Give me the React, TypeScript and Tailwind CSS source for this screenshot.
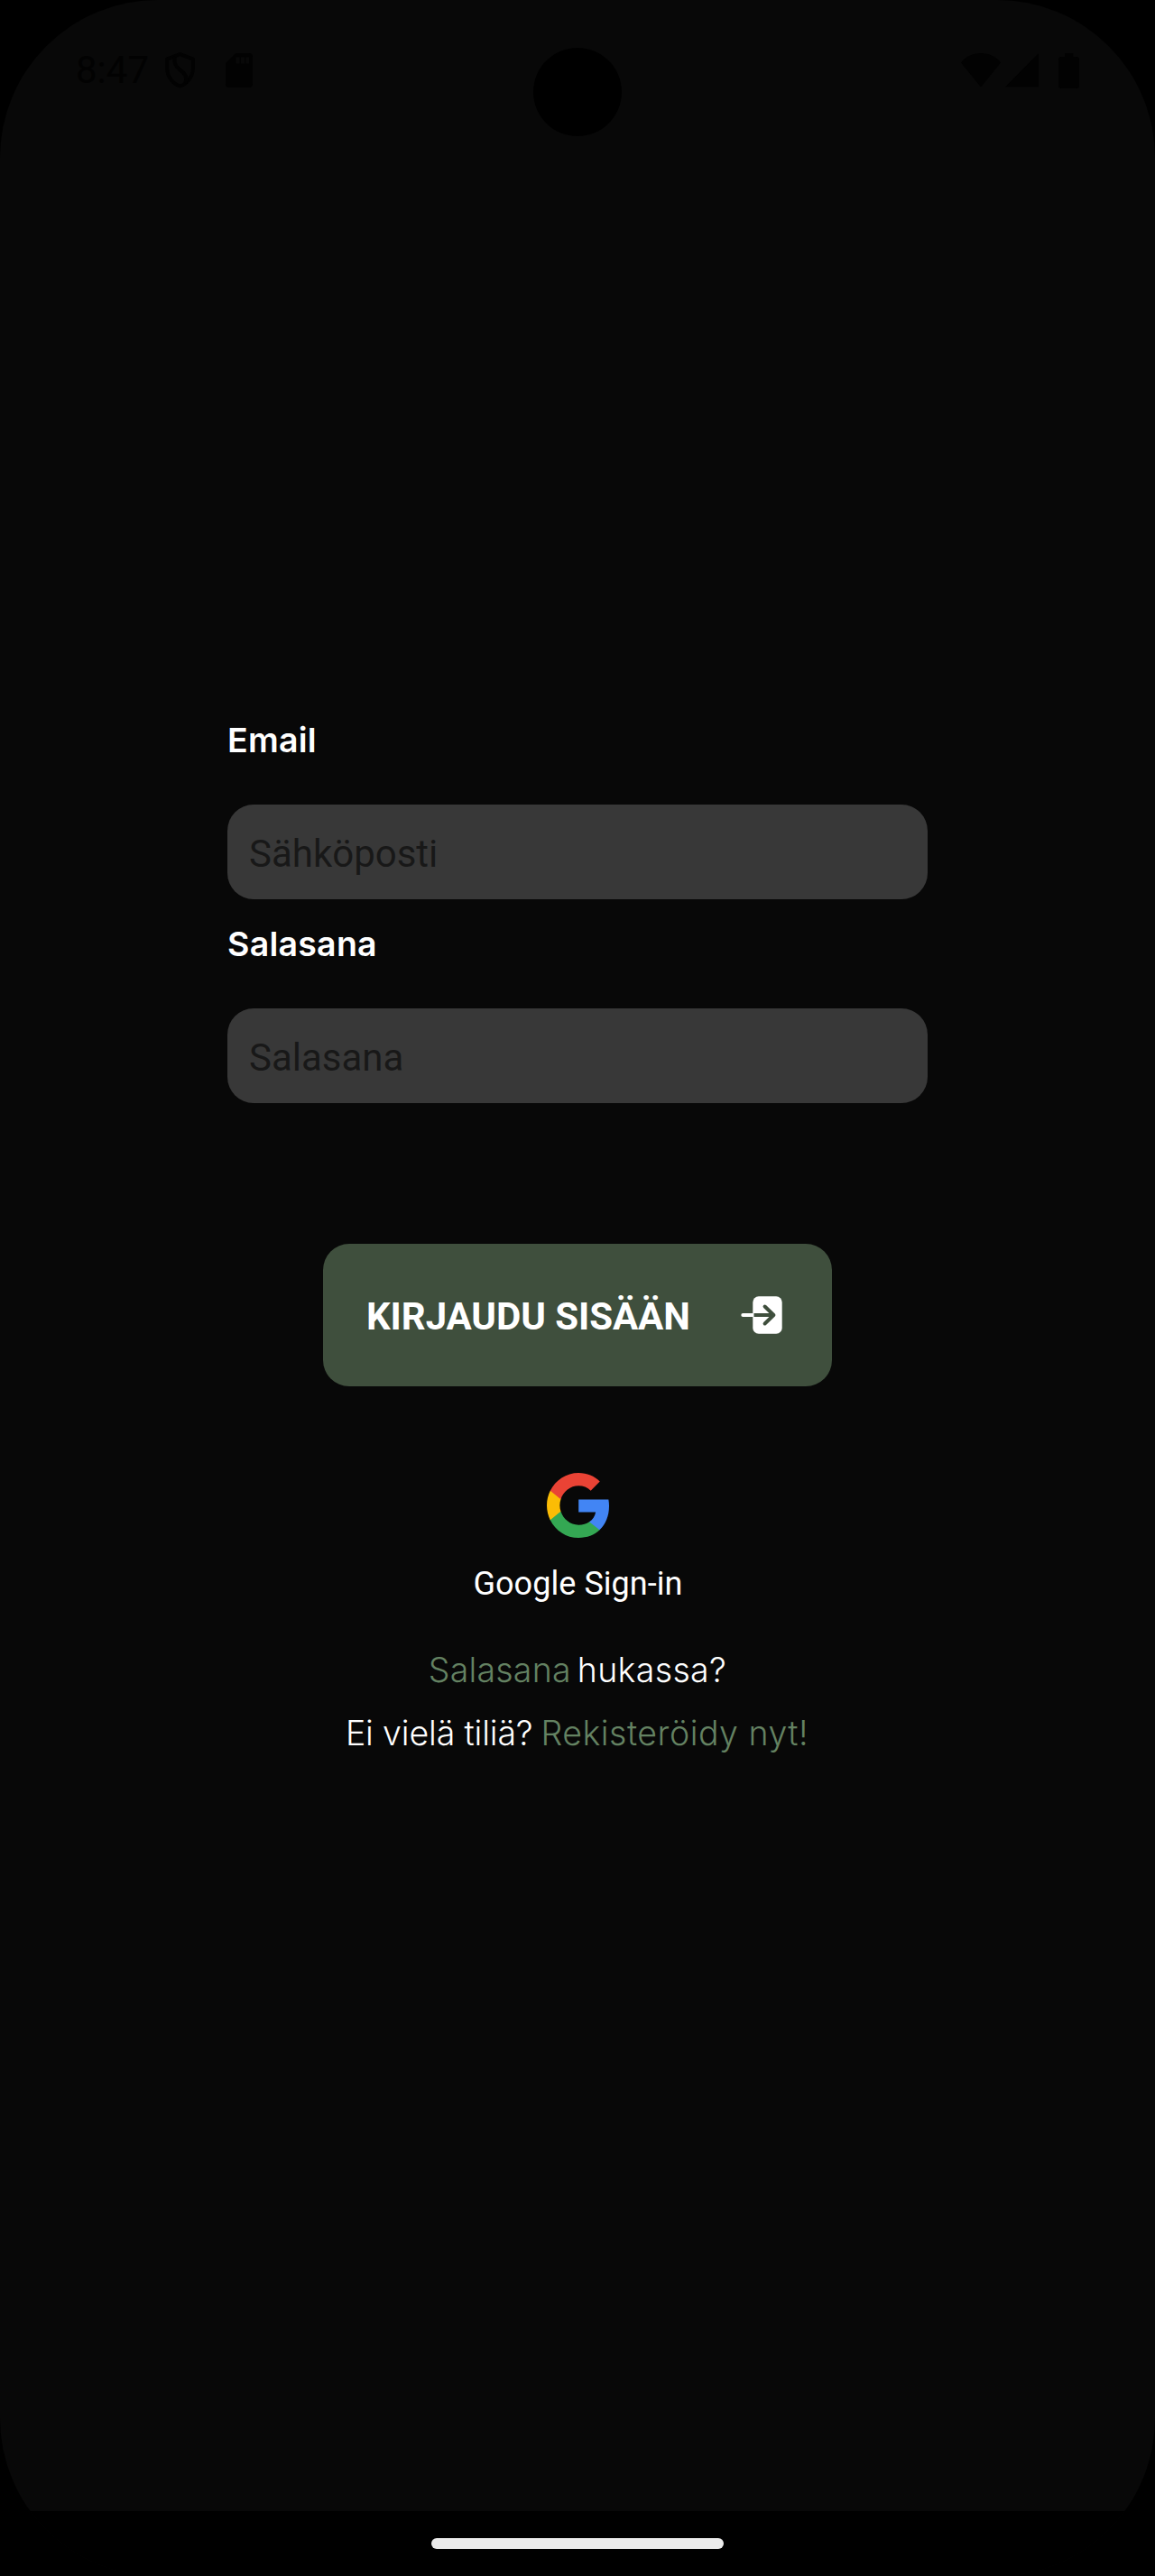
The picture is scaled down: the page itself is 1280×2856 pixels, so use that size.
function StatusBar() {
  return (
    <header className="relative flex h-[156px] shrink-0 items-center justify-between px-[84px] text-[#020202]">
      <div className="flex items-center">
        <span className="w-[81px] text-[42px] leading-[50px]">8:47</span>
        <svg className="ml-[18px] h-10 w-[33px]" viewBox="0 0 33 40" fill="none" stroke="currentColor" strokeWidth="4">
          <path d="M16.5 2.200 30.800 7.400V18c0 8.600-6 16.600-14.300 19.600C8.200 34.600 2.200 26.600 2.200 18V7.400Z" strokeLinejoin="round" />
          <path d="M11 5c-2 6 0 10 5 14 7 5 9 10 6 15" />
        </svg>
        <svg className="ml-[34px] h-[38px] w-[30px]" viewBox="0 0 30 38">
          <path d="M11 0h15a4 4 0 0 1 4 4v30a4 4 0 0 1-4 4H4a4 4 0 0 1-4-4V11Z" fill="currentColor" />
          <path d="M11.500 4.500h4v7h-4zM17 4.500h4v7h-4zM22.500 4.500h3.500v7h-3.500z" fill="#080808" />
        </svg>
      </div>
      <div className="absolute top-[53px] left-[591px] size-[98px] rounded-full bg-black" />
      <div className="flex items-center">
        <svg className="h-[38px] w-11" viewBox="0 0 44 38" fill="currentColor">
          <path d="M22 37.500 0 10.500C5 3.500 13 0 22 0s17 3.500 22 10.500Z" />
        </svg>
        <svg className="ml-[5px] h-[38px] w-[37px]" viewBox="0 0 37 38" fill="currentColor">
          <path d="M37 0v37.500H0Z" />
        </svg>
        <svg className="ml-[22px] h-[39px] w-[23px]" viewBox="0 0 23 39" fill="currentColor">
          <path d="M7 0h9.500v4H20a3 3 0 0 1 3 3v29a3 3 0 0 1-3 3H3a3 3 0 0 1-3-3V7a3 3 0 0 1 3-3h4Z" />
        </svg>
      </div>
    </header>
  );
}

type FieldProps = { id: string; label: string; placeholder: string; type: string };

function Field({ id, label, placeholder, type }: FieldProps) {
  return (
    <div className="flex flex-col gap-11">
      <label
        htmlFor={id}
        className="pt-px font-[Inter,sans-serif] text-[37.5px] leading-[54px] font-semibold tracking-[0.25px] text-white"
      >
        {label}
      </label>
      <input
        id={id}
        type={type}
        placeholder={placeholder}
        className="h-[105px] w-full rounded-[29px] bg-[#383838] px-6 pt-1 text-[42px] text-white outline-none placeholder:text-[#181818]"
      />
    </div>
  );
}

function LoginIcon() {
  return (
    <svg className="h-[42px] w-[46px]" viewBox="0 0 46 42" fill="none" strokeWidth="4" strokeLinecap="round" strokeLinejoin="round">
      <rect x="13.300" y="0.300" width="32.400" height="41.400" rx="6.500" fill="#fff" />
      <path d="M2.300 21H13.300" stroke="#fff" />
      <path d="M14.500 21H36" stroke="#3f4f3d" strokeLinecap="butt" />
      <path d="m26.600 11.500 9.800 9.500-9.800 9.500" stroke="#3f4f3d" />
    </svg>
  );
}

function GoogleLogo() {
  return (
    <svg className="h-[72px] w-[69px]" viewBox="1 1 21.560 22" preserveAspectRatio="none">
      <path fill="#4285F4" d="M22.560 12.250c0-.780-.070-1.530-.200-2.250H12v4.260h5.920c-.260 1.370-1.040 2.530-2.210 3.310v2.770h3.570c2.080-1.920 3.280-4.740 3.280-8.090z" />
      <path fill="#34A853" d="M12 23c2.970 0 5.460-.980 7.280-2.660l-3.570-2.770c-.980.660-2.230 1.060-3.710 1.060-2.860 0-5.290-1.930-6.160-4.530H2.180v2.840C3.990 20.530 7.700 23 12 23z" />
      <path fill="#FBBC05" d="M5.840 14.090c-.220-.660-.350-1.360-.350-2.090s.130-1.430.350-2.090V7.070H2.180C1.430 8.550 1 10.220 1 12s.430 3.450 1.180 4.930l2.850-2.220.810-.620z" />
      <path fill="#EA4335" d="M12 5.380c1.620 0 3.060.560 4.210 1.640l3.150-3.150C17.450 2.090 14.970 1 12 1 7.700 1 3.990 3.470 2.180 7.070l3.660 2.840c.870-2.600 3.300-4.530 6.160-4.530z" />
    </svg>
  );
}

export default function App() {
  return (
    <div className="h-[2856px] w-[1280px] overflow-hidden bg-black font-[Roboto,sans-serif]">
      <div className="flex h-full flex-col overflow-hidden rounded-[175px] bg-[#080808]">
        <StatusBar />
        <main className="flex grow flex-col items-center pt-[637px]">
          <form className="flex w-[776px] flex-col gap-[22px]">
            <Field id="email" label="Email" placeholder="Sähköposti" type="email" />
            <Field id="password" label="Salasana" placeholder="Salasana" type="password" />
          </form>
          <button className="mt-[156px] flex h-[158px] w-[564px] items-center justify-between rounded-[29px] bg-[#3f4f3d] pr-[55px] pl-12">
            <span className="pt-[3px] text-[42px] leading-[50px] font-bold tracking-[-0.08px] text-white">KIRJAUDU SISÄÄN</span>
            <LoginIcon />
          </button>
          <button className="mt-24 flex flex-col items-center text-white">
            <GoogleLogo />
            <span className="mt-[29px] pl-px text-[36px] leading-[44px] tracking-[0.05px]">Google Sign-in</span>
          </button>
          <div className="mt-[47px] flex flex-col items-center gap-4 font-[Inter,sans-serif] text-[37.5px] leading-[54px] font-light text-white">
            <p className="flex gap-[7px]">
              <a className="tracking-[0.2px] text-[#648262]">Salasana</a>
              <span className="tracking-[0.35px]">hukassa?</span>
            </p>
            <p className="flex gap-[9px] pr-px">
              <span className="tracking-[-0.14px]">Ei vielä tiliä?</span>
              <a className="tracking-[0.5px] text-[#648262]">Rekisteröidy nyt!</a>
            </p>
          </div>
        </main>
        <footer className="flex h-[72px] shrink-0 items-center justify-center bg-black">
          <div className="h-3 w-[324px] rounded-full bg-[#ebebeb]" />
        </footer>
      </div>
    </div>
  );
}
